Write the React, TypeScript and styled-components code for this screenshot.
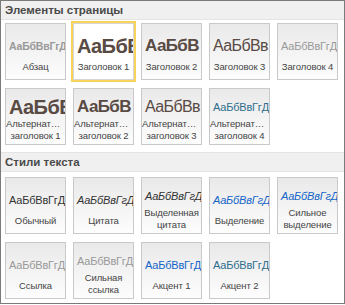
import React from 'react'
import styled, { createGlobalStyle } from 'styled-components'

const Global = createGlobalStyle`
  html, body {
    margin: 0;
    padding: 0;
    background: #fff;
  }
  body {
    font-family: "Liberation Sans", Arial, sans-serif;
  }
`

const Panel = styled.div`
  width: 345px;
  height: 304px;
  box-sizing: border-box;
  border: 1px solid #7a7a7a;
  background: #fff;
  overflow: hidden;
`
const SectionHead = styled.div<{ $first?: boolean }>`
  height: ${p => (p.$first ? 19 : 20)}px;
  box-sizing: border-box;
  padding: 0 4px;
  display: flex;
  align-items: center;
  font-size: 11.5px;
  font-weight: 700;
  color: #4a4a4a;
  background: #f0f0f0;
  border-bottom: 1px solid #e4e4e4;
  border-top: ${p => (p.$first ? 'none' : '1px solid #e4e4e4')};
`
const Grid = styled.div<{ $top: number; $bottom: number }>`
  display: grid;
  grid-template-columns: repeat(5, 61px);
  grid-auto-rows: 57px;
  column-gap: 7px;
  row-gap: 8px;
  padding: ${p => p.$top}px 5px ${p => p.$bottom}px 4px;
`
const Tile = styled.div<{ $selected?: boolean }>`
  box-sizing: border-box;
  display: flex;
  flex-direction: column;
  justify-content: center;
  padding-top: 4px;
  border: 1px solid ${p => (p.$selected ? '#d6d6d6' : '#c9c9c9')};
  background: ${p => (p.$selected ? '#fff' : 'linear-gradient(to bottom, #e9e9e9, #fdfdfd)')};
  outline: ${p => (p.$selected ? '2px solid #f7d35a' : 'none')};
  overflow: hidden;
`
const Sample = styled.div<{ $size: number; $bold?: boolean; $italic?: boolean; $color: string }>`
  height: 22px;
  line-height: 22px;
  padding: 0 3px;
  white-space: nowrap;
  overflow: hidden;
  text-align: center;
  font-size: ${p => p.$size}px;
  font-weight: ${p => (p.$bold ? 700 : 400)};
  font-style: ${p => (p.$italic ? 'italic' : 'normal')};
  letter-spacing: ${p => (p.$size > 15 ? '-0.6px' : '-0.2px')};
  color: ${p => p.$color};
`
const Caption = styled.div<{ $single: boolean }>`
  margin-top: ${p => (p.$single ? 4 : 0)}px;
  font-size: 9.5px;
  line-height: 12px;
  letter-spacing: -0.1px;
  color: #444;
  text-align: center;
`
const CaptionLine = styled.div`
  white-space: nowrap;
  overflow: hidden;
  text-overflow: ellipsis;
`

const BROWN = '#594a44'
const GRAY = '#999'
const TEAL = '#2e6e8e'
const BLUE = '#1565c8'
const DARK = '#333'

type Item = {
  sample: string
  size: number
  color: string
  bold?: boolean
  italic?: boolean
  label: string[]
  selected?: boolean
}

const pageItems: Item[] = [
  { sample: 'АаБбВвГгДд', size: 10.5, color: GRAY, bold: true, label: ['Абзац'] },
  { sample: 'АаБбВ', size: 20, color: BROWN, bold: true, label: ['Заголовок 1'], selected: true },
  { sample: 'АаБбВ', size: 17, color: BROWN, bold: true, label: ['Заголовок 2'] },
  { sample: 'АаБбВв', size: 16, color: BROWN, label: ['Заголовок 3'] },
  { sample: 'АаБбВвГгД', size: 11, color: GRAY, label: ['Заголовок 4'] },
  { sample: 'АаБбВ', size: 20, color: BROWN, bold: true, label: ['Альтернативный', 'заголовок 1'] },
  { sample: 'АаБбВ', size: 17, color: BROWN, bold: true, label: ['Альтернативный', 'заголовок 2'] },
  { sample: 'АаБбВв', size: 16, color: BROWN, label: ['Альтернативный', 'заголовок 3'] },
  { sample: 'АаБбВвГгД', size: 11, color: TEAL, label: ['Альтернативный', 'заголовок 4'] },
]

const textItems: Item[] = [
  { sample: 'АаБбВвГгД', size: 11, color: DARK, label: ['Обычный'] },
  { sample: 'АаБбВвГгД', size: 11, color: DARK, italic: true, label: ['Цитата'] },
  { sample: 'АаБбВвГгД', size: 11, color: DARK, italic: true, label: ['Выделенная', 'цитата'] },
  { sample: 'АаБбВвГгД', size: 11, color: BLUE, italic: true, label: ['Выделение'] },
  { sample: 'АаБбВвГгД', size: 11, color: BLUE, italic: true, label: ['Сильное', 'выделение'] },
  { sample: 'АаБбВвГгДд', size: 11, color: GRAY, label: ['Ссылка'] },
  { sample: 'АаБбВвГгДд', size: 11, color: GRAY, label: ['Сильная', 'ссылка'] },
  { sample: 'АаБбВвГгДд', size: 11, color: BLUE, label: ['Акцент 1'] },
  { sample: 'АаБбВвГгДд', size: 11, color: TEAL, label: ['Акцент 2'] },
]

function StyleTile({ item }: { item: Item }) {
  return (
    <Tile $selected={item.selected}>
      <Sample $size={item.size} $bold={item.bold} $italic={item.italic} $color={item.color}>
        {item.sample}
      </Sample>
      <Caption $single={item.label.length === 1}>
        {item.label.map(l => (
          <CaptionLine key={l}>{l}</CaptionLine>
        ))}
      </Caption>
    </Tile>
  )
}

export default function App() {
  return (
    <>
      <Global />
      <Panel>
        <SectionHead $first>Элементы страницы</SectionHead>
        <Grid $top={3} $bottom={7}>
          {pageItems.map((it, i) => (
            <StyleTile key={i} item={it} />
          ))}
        </Grid>
        <SectionHead>Стили текста</SectionHead>
        <Grid $top={5} $bottom={3}>
          {textItems.map((it, i) => (
            <StyleTile key={i} item={it} />
          ))}
        </Grid>
      </Panel>
    </>
  )
}
